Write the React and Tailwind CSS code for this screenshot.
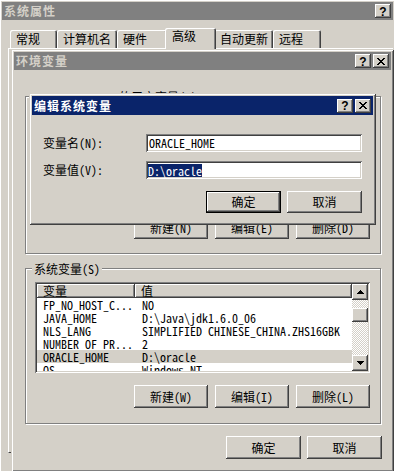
import React from "react";

const RAISED =
  "shadow-[inset_-1px_-1px_#404040,inset_1px_1px_#ffffff,inset_-2px_-2px_#808080,inset_2px_2px_#d4d0c8]";
const FRAME =
  "shadow-[inset_1px_1px_#d4d0c8,inset_-1px_-1px_#404040,inset_2px_2px_#ffffff,inset_-2px_-2px_#808080]";
const SUNKEN =
  "shadow-[inset_1px_1px_#808080,inset_-1px_-1px_#ffffff,inset_2px_2px_#404040,inset_-2px_-2px_#d4d0c8]";

function CapBtn({ kind }) {
  return (
    <div
      className={`w-[16px] h-[14px] bg-[#d4d0c8] ${RAISED} flex items-center justify-center`}
    >
      {kind === "help" ? (
        <span className="font-['Liberation_Sans',sans-serif] font-bold text-[12px] leading-none text-black mt-[1px]">
          ?
        </span>
      ) : (
        <svg width="8" height="7" viewBox="0 0 8 7" shapeRendering="crispEdges">
          <path
            fill="#000"
            d="M0 0h2v1H0z M6 0h2v1H6z M1 1h2v1H1z M5 1h2v1H5z M2 2h4v1H2z M3 3h2v1H3z M2 4h4v1H2z M1 5h2v1H1z M5 5h2v1H5z M0 6h2v1H0z M6 6h2v1H6z"
          />
        </svg>
      )}
    </div>
  );
}

function Btn({ children, def = false, w = "w-[75px]", h = "h-[23px]" }) {
  if (def) {
    return (
      <div className={`${w} ${h} border border-black bg-[#d4d0c8] flex`}>
        <div className={`flex-1 ${RAISED} flex items-center justify-center`}>{children}</div>
      </div>
    );
  }
  return (
    <div className={`${w} ${h} bg-[#d4d0c8] ${RAISED} flex items-center justify-center`}>
      {children}
    </div>
  );
}

function Tab({ label, selected = false, w }) {
  if (selected) {
    return (
      <div
        className={`relative z-10 ${w} h-[21px] -mb-px -mx-[2px] bg-[#d4d0c8] rounded-t-[2px] shadow-[inset_1px_1px_#ffffff,inset_-1px_0_#404040,inset_-2px_0_#808080] pl-[7px] pt-[1px]`}
      >
        {label}
      </div>
    );
  }
  return (
    <div
      className={`${w} h-[18px] bg-[#d4d0c8] rounded-t-[2px] shadow-[inset_1px_1px_#ffffff,inset_-1px_0_#404040,inset_-2px_0_#808080] pl-[6px] pt-[2px]`}
    >
      {label}
    </div>
  );
}

function UpArrow() {
  return (
    <svg width="7" height="4" viewBox="0 0 7 4" shapeRendering="crispEdges">
      <path fill="#000" d="M3 0h1v1H3z M2 1h3v1H2z M1 2h5v1H1z M0 3h7v1H0z" />
    </svg>
  );
}
function DownArrow() {
  return (
    <svg width="7" height="4" viewBox="0 0 7 4" shapeRendering="crispEdges">
      <path fill="#000" d="M0 0h7v1H0z M1 1h5v1H1z M2 2h3v1H2z M3 3h1v1H3z" />
    </svg>
  );
}

const rows = [
  ["FP_NO_HOST_C...", "NO"],
  ["JAVA_HOME", "D:\\Java\\jdk1.6.0_06"],
  ["NLS_LANG", "SIMPLIFIED CHINESE_CHINA.ZHS16GBK"],
  ["NUMBER_OF_PR...", "2"],
  ["ORACLE_HOME", "D:\\oracle"],
  ["OS", "Windows NT"],
];

export default function App() {
  return (
    <div className="relative w-[394px] h-[471px] overflow-hidden bg-[#d4d0c8] text-black text-[12px] leading-[14px] font-['Noto_Sans_Mono_CJK_SC','Noto_Sans_CJK_SC',monospace]">
      {/* Outer window: 系统属性 */}
      <div
        className={`absolute left-[-1px] top-[-1px] w-[397px] h-[480px] p-[3px] bg-[#d4d0c8] ${FRAME} flex flex-col`}
      >
        <div className="h-[18px] bg-[#808080] flex items-center pl-[2px] pr-[2px]">
          <span className="font-bold text-[#d4d0c8] tracking-[1px]">系统属性</span>
          <div className="ml-auto">
            <CapBtn kind="help" />
          </div>
        </div>
        <div className="ml-[6px] mt-[8px] flex flex-col">
          <div className="flex items-end h-[20px] pl-[2px]">
            <Tab label="常规" w="w-[47px]" />
            <Tab label="计算机名" w="w-[60px]" />
            <Tab label="硬件" w="w-[50px]" />
            <Tab label="高级" w="w-[51px]" selected />
            <Tab label="自动更新" w="w-[59px]" />
            <Tab label="远程" w="w-[48px]" />
          </div>
          <div className="h-[405px] border-l border-t border-b border-l-white border-t-white border-b-[#404040]" />
        </div>
      </div>

      {/* Env window: 环境变量 */}
      <div
        className={`absolute left-[11px] top-[49px] w-[383px] h-[423px] p-[3px] bg-[#d4d0c8] ${FRAME} flex flex-col`}
      >
        <div className="h-[18px] shrink-0 bg-[#808080] flex items-center pl-[2px] pr-[2px]">
          <span className="font-bold text-[#d4d0c8] tracking-[1px]">环境变量</span>
          <div className="ml-auto flex gap-[2px]">
            <CapBtn kind="help" />
            <CapBtn kind="close" />
          </div>
        </div>

        <div className="flex flex-col pl-[11px] pr-[10px]">
          {/* user variables group */}
          <div className="relative mt-[26px] h-[158px] border border-[#808080] shadow-[inset_1px_1px_#ffffff,1px_1px_#ffffff] flex flex-col">
            <span className="absolute left-[91px] top-[-7px] bg-[#d4d0c8] px-[2px]">
              的用户变量(U)
            </span>
            <div className="flex-1" />
            <div className="flex justify-end gap-[7px] pr-[10px] pb-[14px]">
              <Btn w="w-[74px]">新建(N)</Btn>
              <Btn w="w-[74px]">编辑(E)</Btn>
              <Btn w="w-[74px]">删除(D)</Btn>
            </div>
          </div>

          {/* system variables group */}
          <div className="relative mt-[14px] h-[156px] border border-[#808080] shadow-[inset_1px_1px_#ffffff,1px_1px_#ffffff] flex flex-col">
            <span className="absolute left-[6px] top-[-7px] bg-[#d4d0c8] px-[2px]">
              系统变量(S)
            </span>
            <div className={`mt-[13px] ml-[9px] w-[335px] h-[91px] bg-white ${SUNKEN} p-[2px] flex`}>
              <div className="flex-1 flex flex-col overflow-hidden">
                <div className="flex h-[14px] shrink-0">
                  <div className={`w-[98px] bg-[#d4d0c8] ${RAISED} pl-[6px] leading-[14px]`}>变量</div>
                  <div className={`flex-1 bg-[#d4d0c8] ${RAISED} pl-[6px] leading-[14px]`}>值</div>
                </div>
                {rows.map(([k, v], i) => (
                  <div
                    key={k}
                    className={`flex h-[13px] shrink-0 items-center leading-[13px] ${
                      i === 4 ? "bg-[#d4d0c8]" : ""
                    }`}
                  >
                    <div className="w-[98px] pl-[6px] whitespace-nowrap">{k}</div>
                    <div className="flex-1 pl-[7px] whitespace-nowrap">{v}</div>
                  </div>
                ))}
              </div>
              <div className="w-[16px] flex flex-col bg-[repeating-conic-gradient(#d4d0c8_0_25%,#ffffff_0_50%)] bg-[length:2px_2px]">
                <div className={`h-[16px] bg-[#d4d0c8] ${RAISED} flex items-center justify-center`}>
                  <UpArrow />
                </div>
                <div className="h-[8px]" />
                <div className={`h-[14px] bg-[#d4d0c8] ${RAISED}`} />
                <div className="flex-1" />
                <div className={`h-[16px] bg-[#d4d0c8] ${RAISED} flex items-center justify-center`}>
                  <DownArrow />
                </div>
              </div>
            </div>
            <div className="flex justify-end gap-[7px] pr-[10px] mt-[12px]">
              <Btn w="w-[74px]">新建(W)</Btn>
              <Btn w="w-[74px]">编辑(I)</Btn>
              <Btn w="w-[74px]">删除(L)</Btn>
            </div>
          </div>

          <div className="flex justify-end gap-[6px] mt-[12px] -mr-[1px]">
            <Btn>确定</Btn>
            <Btn>取消</Btn>
          </div>
        </div>
      </div>

      {/* Edit dialog: 编辑系统变量 */}
      <div
        className={`absolute left-[29px] top-[93px] w-[347px] h-[132px] p-[3px] bg-[#d4d0c8] ${FRAME} flex flex-col`}
      >
        <div className="h-[19px] shrink-0 bg-[#0a246a] flex items-center pl-[2px] pr-[2px]">
          <span className="font-bold text-white tracking-[1px]">编辑系统变量</span>
          <div className="ml-auto flex gap-[2px]">
            <CapBtn kind="help" />
            <CapBtn kind="close" />
          </div>
        </div>
        <div className="flex flex-col pl-[11px] pr-[11px] pt-[19px]">
          <div className="flex items-center">
            <div className="w-[103px]">变量名(N):</div>
            <div className={`flex-1 h-[18px] bg-white ${SUNKEN} pl-[3px] flex items-center`}>
              ORACLE_HOME
            </div>
          </div>
          <div className="flex items-center mt-[9px]">
            <div className="w-[103px]">变量值(V):</div>
            <div className={`flex-1 h-[18px] bg-white ${SUNKEN} pl-[2px] flex items-center`}>
              <span className="bg-[#0a246a] text-white leading-[13px]">D:\oracle</span>
            </div>
          </div>
          <div className="flex justify-end gap-[6px] mt-[12px]">
            <Btn def h="h-[22px]">确定</Btn>
            <Btn h="h-[22px]">取消</Btn>
          </div>
        </div>
      </div>
    </div>
  );
}
